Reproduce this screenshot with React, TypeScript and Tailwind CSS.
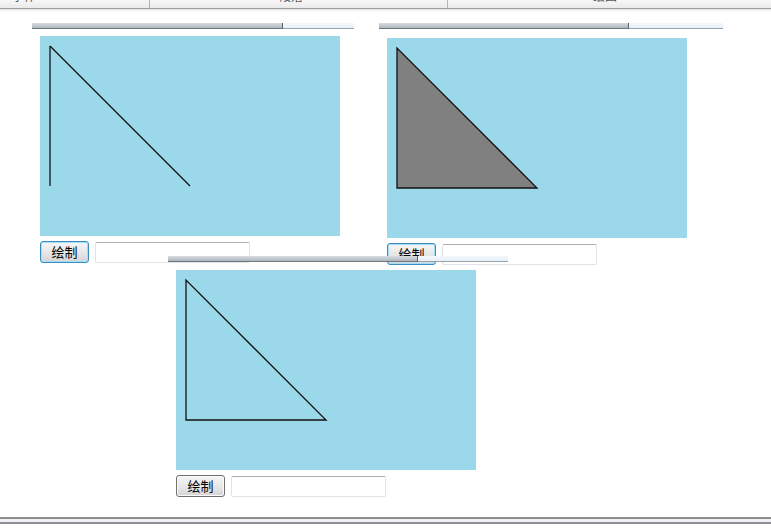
import React from "react";

const FONT = { fontFamily: '"Liberation Sans", "Noto Sans CJK SC", sans-serif' };

function Strip({ gray, light }: { gray: number; light: number }) {
  return (
    <div className="flex h-[6px]">
      <div
        className="h-full border-b border-[#6f777f] border-r border-r-[#5a6168] bg-gradient-to-b from-[#d8dde2] to-[#aeb6be]"
        style={{ width: gray }}
      />
      <div
        className="h-full border-b border-[#9aa3ab] bg-gradient-to-b from-[#f4f8fc] to-[#e6eff8]"
        style={{ width: light }}
      />
    </div>
  );
}

function Panel({
  gray,
  light,
  gap,
  focused,
  children,
}: {
  gray: number;
  light: number;
  gap: number;
  focused: boolean;
  children: React.ReactNode;
}) {
  return (
    <div className="flex flex-col">
      <Strip gray={gray} light={light} />
      <div className="ml-[8px]" style={{ marginTop: gap }}>
        <div className="w-[300px] h-[200px] bg-[#9bd9ea]">
          <svg width="300" height="200" viewBox="0 0 300 200" className="block">
            {children}
          </svg>
        </div>
        <div className="flex items-start mt-[5px]">
          <button
            className={
              "w-[49px] h-[22px] rounded-[3px] border text-[13px] leading-none text-black bg-gradient-to-b from-[#f6f6f6] via-[#e8e8e8] to-[#d4d4d4] " +
              (focused
                ? "border-[#3a8cc4] shadow-[inset_0_0_0_1px_#a6dcf5]"
                : "border-[#707070] shadow-[inset_0_0_0_1px_#fafafa]")
            }
            style={FONT}
          >
            绘制
          </button>
          <div className="ml-[6px] mt-[1px] w-[155px] h-[21px] bg-white rounded-[2px] border border-[#dfe3e8] border-t-[#abadb3]" />
        </div>
      </div>
    </div>
  );
}

export default function App() {
  return (
    <div className="relative w-[771px] h-[529px] bg-white overflow-hidden" style={FONT}>
      {/* header tabs cut off at top */}
      <div className="flex h-[9px] border-b border-[#9c9c9c] bg-gradient-to-b from-[#f7f7f7] to-[#eaeaea] overflow-hidden text-[12px] text-[#555]">
        <div className="w-[150px] border-r border-[#b5b5b5] relative">
          <span className="absolute left-[12px] top-[-10px] leading-[14px]">字体</span>
        </div>
        <div className="w-[298px] border-r border-[#b5b5b5] relative">
          <span className="absolute left-[129px] top-[-10px] leading-[14px]">段落</span>
        </div>
        <div className="flex-1 relative">
          <span className="absolute left-[145px] top-[-10px] leading-[14px]">绘图</span>
        </div>
      </div>
      <div className="h-[3px] bg-gradient-to-b from-[#e4e4e4] to-white" />

      {/* row 1 */}
      <div className="flex items-start">
        <div className="ml-[32px] mt-[11px]">
          <Panel gray={251} light={71} gap={7} focused>
            <polyline points="10,10 10,150" fill="none" stroke="#111" strokeWidth="1.3" />
            <line x1="10" y1="10" x2="150" y2="150" stroke="#111" strokeWidth="1.3" />
          </Panel>
        </div>
        <div className="ml-[25px] mt-[11px]">
          <Panel gray={250} light={94} gap={9} focused>
            <polygon points="10,10 10,150 150,150" fill="#808080" stroke="#111" strokeWidth="1.3" />
          </Panel>
        </div>
      </div>

      {/* row 2 */}
      <div className="relative z-10 ml-[168px] mt-[-9px]">
        <Panel gray={250} light={90} gap={8} focused={false}>
          <polygon points="10,10 10,150 150,150" fill="none" stroke="#111" strokeWidth="1.3" />
        </Panel>
      </div>

      {/* footer */}
      <div className="absolute left-0 right-0 top-[517px] h-[7px] border-t-2 border-b-2 border-[#8e8e8e] bg-[#eef2f6]" />
    </div>
  );
}
